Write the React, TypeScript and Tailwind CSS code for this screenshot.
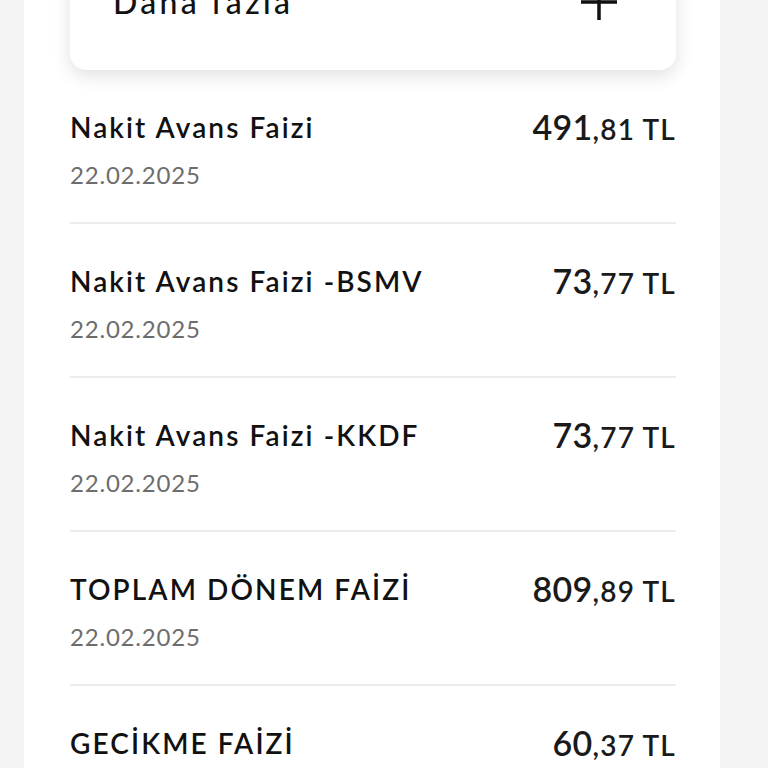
import React from "react";

interface Charge {
  title: string;
  date: string;
  whole: string;
  fraction: string;
}

const charges: Charge[] = [
  { title: "Nakit Avans Faizi", date: "22.02.2025", whole: "491", fraction: ",81" },
  { title: "Nakit Avans Faizi -BSMV", date: "22.02.2025", whole: "73", fraction: ",77" },
  { title: "Nakit Avans Faizi -KKDF", date: "22.02.2025", whole: "73", fraction: ",77" },
  { title: "TOPLAM DÖNEM FAİZİ", date: "22.02.2025", whole: "809", fraction: ",89" },
  { title: "GECİKME FAİZİ", date: "22.02.2025", whole: "60", fraction: ",37" },
];

const ChargeRow = ({ charge, last }: { charge: Charge; last: boolean }) => {
  return (
    <div
      className={`shrink-0 flex justify-between pt-[39px] pb-[32px] ${
        last ? "" : "border-b-2 border-[#ececec]"
      }`}
    >
      <div className="flex flex-col">
        <span className="text-[28px] leading-[36px] font-semibold tracking-[2.1px] text-[#111]">
          {charge.title}
        </span>
        <span className="mt-[15px] text-[24px] leading-[30px] tracking-[0.8px] text-[#6d6d6d]">
          {charge.date}
        </span>
      </div>
      <div className="text-[#1a1a1a] font-semibold leading-[36px] whitespace-nowrap">
        <span className="text-[34px] tracking-[0.3px]">{charge.whole}</span>
        <span className="text-[28px] tracking-[1.2px]">{charge.fraction} TL</span>
      </div>
    </div>
  );
};

export default function App() {
  return (
    <div
      className="h-[768px] overflow-hidden bg-[#f4f4f4] flex"
      style={{ fontFamily: "Lato, 'Liberation Sans', sans-serif" }}
    >
      <div className="ml-[24px] w-[696px] shrink-0 bg-white pl-[46px] pr-[44px] flex flex-col">
        {/* top card, cut off by the viewport */}
        <div className="shrink-0 -mt-[40px] h-[110px] rounded-[16px] bg-white shadow-[0_6px_18px_rgba(0,0,0,0.12)] flex items-start justify-between pl-[43px] pr-[57px] pt-[22px]">
          <span className="text-[32px] leading-[40px] font-medium tracking-[3.3px] text-[#111]">
            Daha fazla
          </span>
          <svg width="40" height="40" viewBox="0 0 40 40">
            <path d="M20 2 V38 M2 20 H38" stroke="#111" strokeWidth="3.5" />
          </svg>
        </div>
        <div className="shrink-0 flex flex-col">
          {charges.map((c, i) => (
            <ChargeRow key={i} charge={c} last={i === charges.length - 1} />
          ))}
        </div>
      </div>
    </div>
  );
}
